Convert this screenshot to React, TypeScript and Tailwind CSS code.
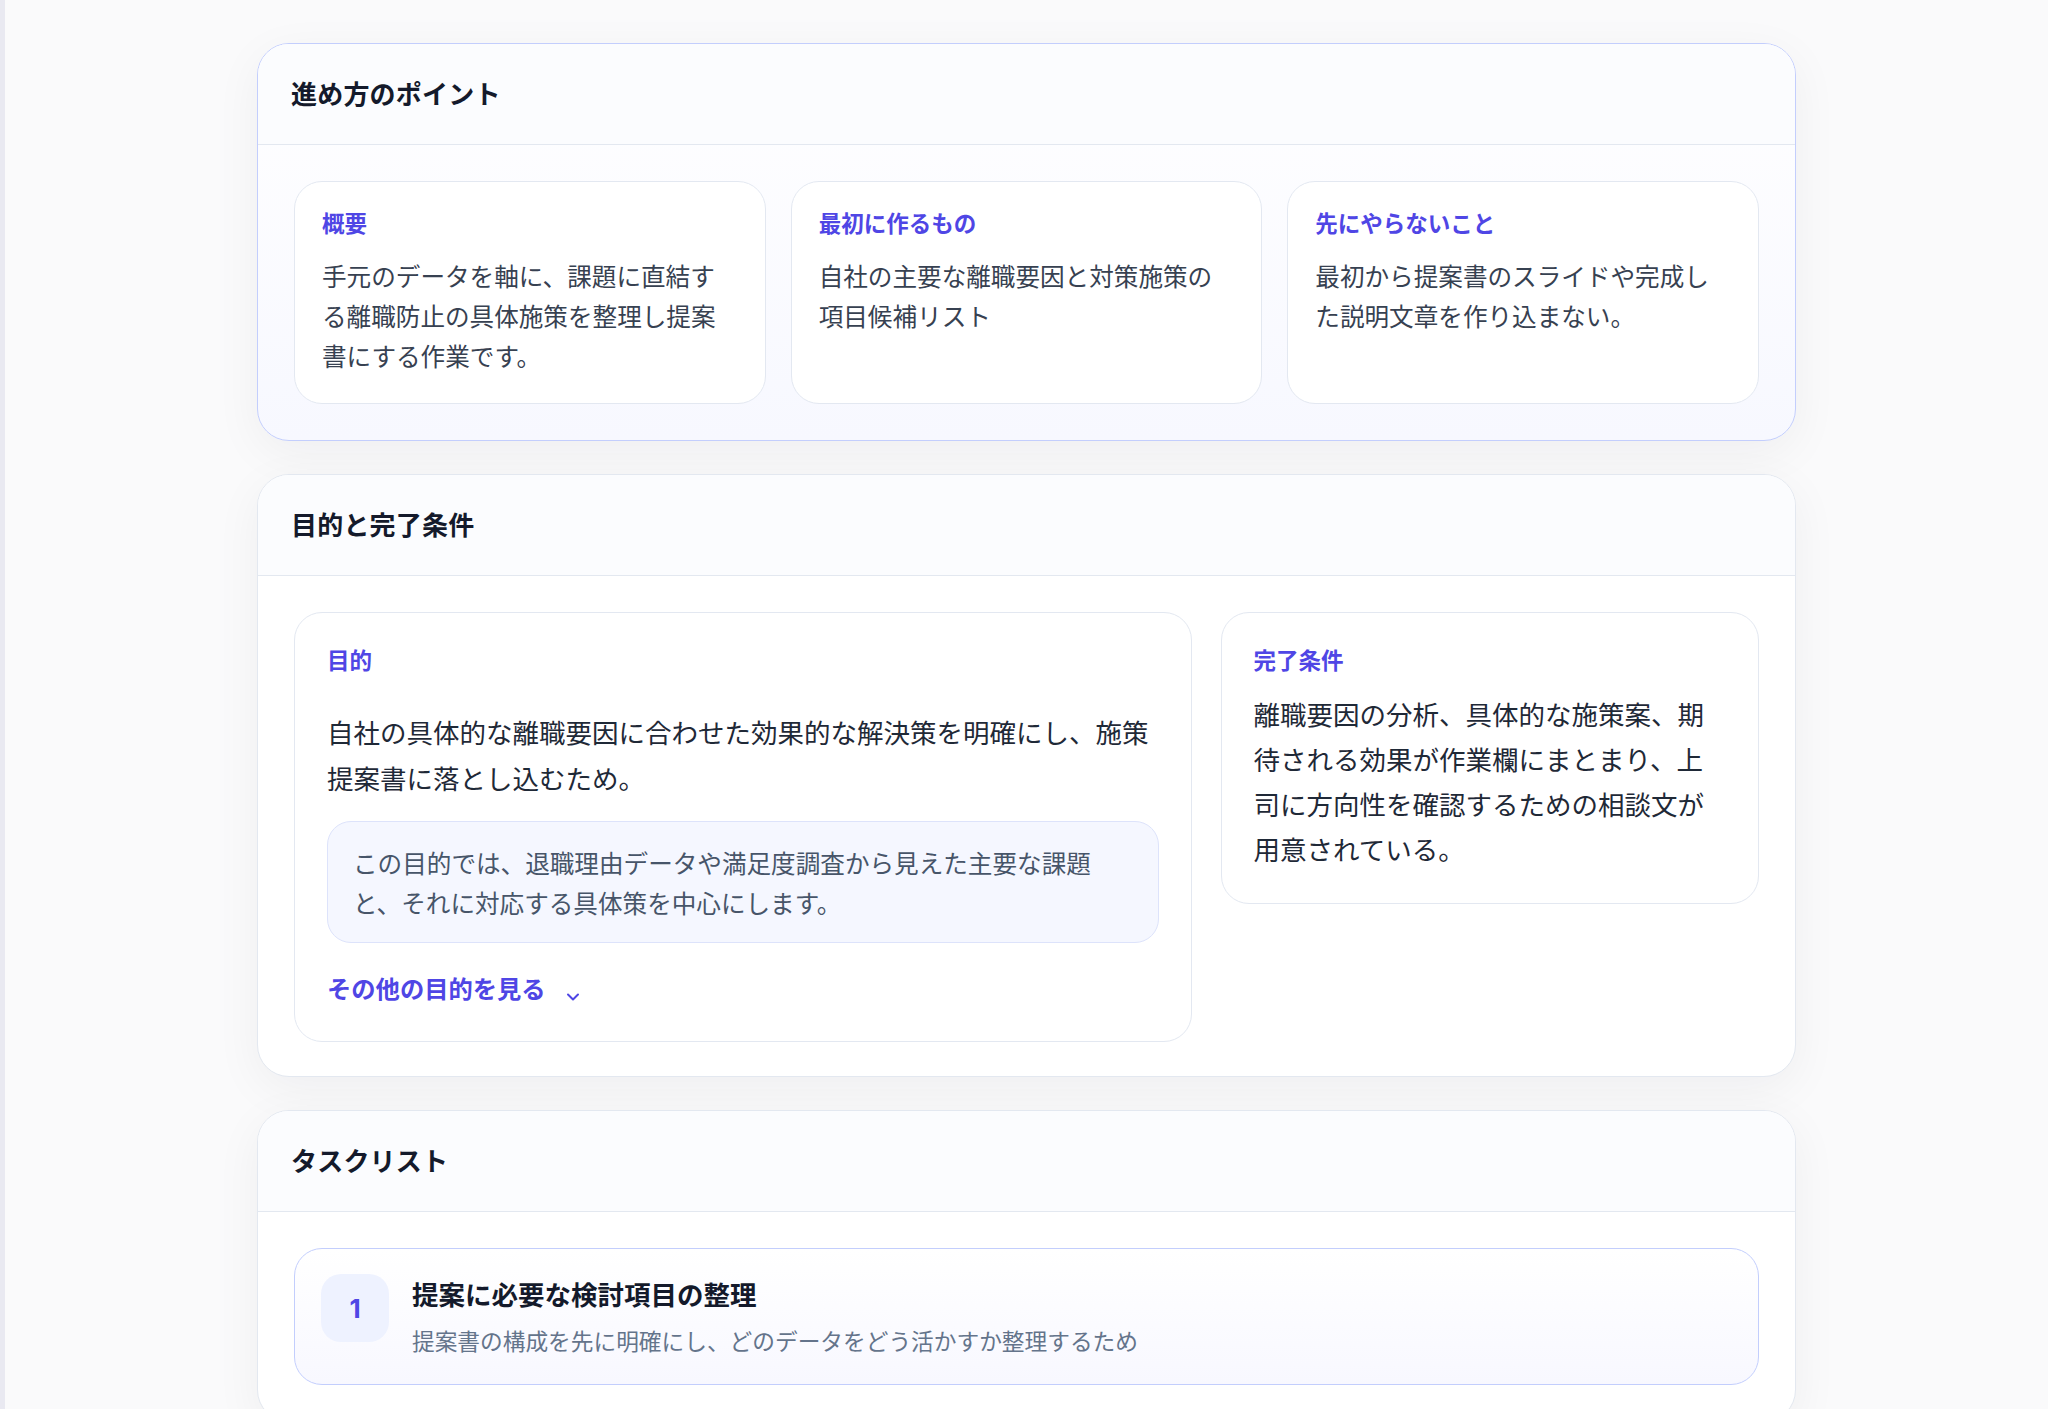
import React from "react";

function SectionHeader({ title }: { title: string }) {
  return (
    <div className="h-[101px] px-[33px] pb-[2px] flex items-center border-b border-[#e3e8f0] bg-[#fbfcfe]">
      <h2 className="text-[26px] leading-[36px] font-bold text-[#141a2b] tracking-[0.2px]">{title}</h2>
    </div>
  );
}

function PointCard({ label, text }: { label: string; text: string }) {
  return (
    <div className="rounded-[28px] border border-[#e3e8f1] bg-white px-[27px] pt-[24px] pb-[28px]">
      <div className="text-[22.5px] leading-[32px] font-bold text-[#4f46e5]">{label}</div>
      <p className="mt-[17px] text-[24.6px] leading-[40px] text-[#374151]">{text}</p>
    </div>
  );
}

export default function App() {
  return (
    <div className="min-h-screen flex bg-[#fafafb] font-['Noto_Sans_CJK_JP','Noto_Sans',sans-serif]">
      <div className="w-[5px] shrink-0 bg-[#e9e9f1]" />
      <main className="flex-1 pt-[43px] pb-[80px]">
        <div className="mx-auto max-w-[1539px] flex flex-col gap-[33px]">
          {/* Section 1 */}
          <section className="rounded-[32px] border-[1.5px] border-[#c3cefd] bg-gradient-to-b from-white to-[#f7f8ff] overflow-hidden shadow-[0_12px_48px_rgba(15,23,42,0.05)]">
            <SectionHeader title="進め方のポイント" />
            <div className="p-9 grid grid-cols-3 gap-[25px]">
              <PointCard
                label="概要"
                text="手元のデータを軸に、課題に直結する離職防止の具体施策を整理し提案書にする作業です。"
              />
              <PointCard
                label="最初に作るもの"
                text="自社の主要な離職要因と対策施策の項目候補リスト"
              />
              <PointCard
                label="先にやらないこと"
                text="最初から提案書のスライドや完成した説明文章を作り込まない。"
              />
            </div>
          </section>

          {/* Section 2 */}
          <section className="rounded-[32px] border border-[#e3e8f0] bg-white overflow-hidden shadow-[0_12px_48px_rgba(15,23,42,0.05)]">
            <SectionHeader title="目的と完了条件" />
            <div className="pt-[36px] px-9 pb-[34px] grid grid-cols-[5fr_3fr] gap-[29px] items-start">
              <div className="rounded-[28px] border border-[#e3e8f1] bg-white px-8 pt-[30px] pb-[35px]">
                <div className="text-[22.5px] leading-[32px] font-bold text-[#4f46e5]">目的</div>
                <p className="mt-[34px] text-[26.5px] leading-[45.5px] text-[#1f2937]">
                  自社の具体的な離職要因に合わせた効果的な解決策を明確にし、施策提案書に落とし込むため。
                </p>
                <div className="mt-[21px] rounded-[24px] border border-[#dde3fb] bg-[#f5f7ff] px-[25px] py-[20px]">
                  <p className="text-[24.6px] leading-[40px] text-[#475569]">
                    この目的では、退職理由データや満足度調査から見えた主要な課題と、それに対応する具体策を中心にします。
                  </p>
                </div>
                <button className="mt-[27px] flex items-end gap-[20px] text-[24.3px] leading-[36px] font-bold text-[#4f46e5]">
                  <span>その他の目的を見る</span>
                  <svg width="14" height="10" viewBox="0 0 14 10" className="mb-[4px]" fill="none">
                    <path d="M2 2.5 L7 7.5 L12 2.5" stroke="#4f46e5" strokeWidth="2" strokeLinecap="round" strokeLinejoin="round" />
                  </svg>
                </button>
              </div>
              <div className="rounded-[28px] border border-[#e3e8f1] bg-white px-8 pt-[30px] pb-8">
                <div className="text-[22.5px] leading-[32px] font-bold text-[#4f46e5]">完了条件</div>
                <p className="mt-4 text-[26.5px] leading-[45px] text-[#1f2937]">
                  離職要因の分析、具体的な施策案、期待される効果が作業欄にまとまり、上司に方向性を確認するための相談文が用意されている。
                </p>
              </div>
            </div>
          </section>

          {/* Section 3 */}
          <section className="rounded-[32px] border border-[#e3e8f0] bg-white overflow-hidden shadow-[0_12px_48px_rgba(15,23,42,0.05)]">
            <SectionHeader title="タスクリスト" />
            <div className="p-9 flex flex-col gap-6">
              <div className="rounded-[28px] border-[1.5px] border-[#c3cefd] bg-gradient-to-b from-white to-[#f8f8ff] px-[26px] pt-[25px] pb-[26px] flex items-start gap-[23px]">
                <div className="w-[68px] h-[68px] shrink-0 rounded-[20px] bg-[#eef2ff] flex items-center justify-center text-[26px] font-bold text-[#4f46e5] font-['Inter','Noto_Sans',sans-serif]">
                  1
                </div>
                <div className="pt-[2px]">
                  <div className="text-[26.5px] leading-[36px] font-bold text-[#141a2b]">提案に必要な検討項目の整理</div>
                  <div className="mt-3 text-[22.7px] leading-[34px] text-[#64748b]">
                    提案書の構成を先に明確にし、どのデータをどう活かすか整理するため
                  </div>
                </div>
              </div>
            </div>
          </section>
        </div>
      </main>
    </div>
  );
}
